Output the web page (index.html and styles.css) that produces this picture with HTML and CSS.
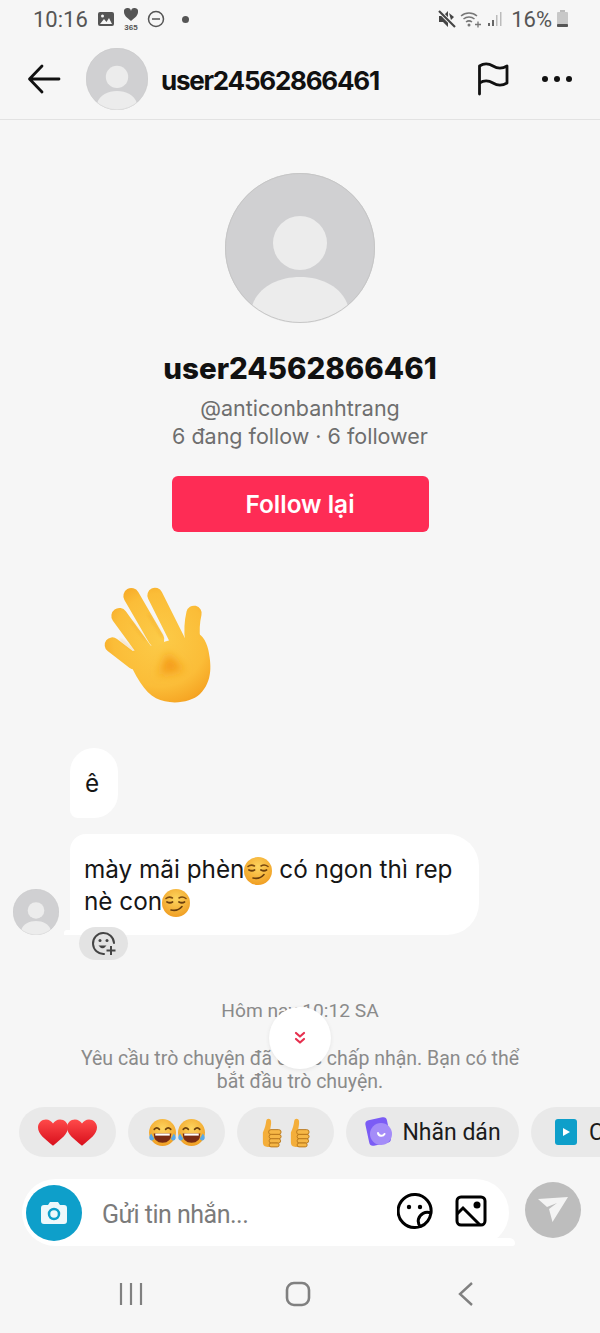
FILE: index.html
```html
<!DOCTYPE html>
<html lang="vi">
<head>
<meta charset="utf-8">
<title>user24562866461</title>
<link rel="stylesheet" href="styles.css">
</head>
<body>
<svg class="defs" width="0" height="0" aria-hidden="true">
  <defs>
    <radialGradient id="face" cx="50%" cy="35%" r="70%"><stop offset="0" stop-color="#fdd55f"/><stop offset="1" stop-color="#ef9a1e"/></radialGradient>
    <radialGradient id="palm" gradientUnits="userSpaceOnUse" cx="300" cy="210" r="215"><stop offset="0" stop-color="#fccb48"/><stop offset=".65" stop-color="#fbbd38"/><stop offset=".9" stop-color="#f6a725"/><stop offset="1" stop-color="#f0981c"/></radialGradient>
    <linearGradient id="heart" x1="0" y1="0" x2="0" y2="1"><stop offset="0" stop-color="#ff4a4a"/><stop offset="1" stop-color="#d80f1c"/></linearGradient>
    <filter id="soft" x="-50%" y="-50%" width="200%" height="200%"><feGaussianBlur stdDeviation="14"/></filter>
    <filter id="soft2" x="-50%" y="-50%" width="200%" height="200%"><feGaussianBlur stdDeviation="4"/></filter>
    <symbol id="avatar" viewBox="0 0 150 150">
      <circle cx="75" cy="75" r="75" fill="#d0d0d2"/>
      <circle cx="75" cy="70" r="27" fill="#ececec"/>
      <path d="M27 133c6-19 26-29 48-29s42 10 48 29a75 75 0 0 1-96 0z" fill="#ececec"/>
      <circle cx="75" cy="75" r="74.500" fill="none" stroke="#c6c6c6"/>
    </symbol>
    <symbol id="smirk" viewBox="0 0 28 28">
      <circle cx="14" cy="14" r="14" fill="url(#face)"/>
      <path d="M4 9.500q3-2.500 6.500-.5M17 9q3.500-2 7 .5" fill="none" stroke="#7a4a10" stroke-width="1.500" stroke-linecap="round"/>
      <path d="M5 13q3 1.500 5.500 0M17 13q3 1.500 5.500 0" fill="none" stroke="#6b3f0d" stroke-width="1.800" stroke-linecap="round"/>
      <path d="M9 21q7 1.500 11-3.500" fill="none" stroke="#6b3f0d" stroke-width="1.600" stroke-linecap="round"/>
    </symbol>
    <symbol id="laugh" viewBox="0 0 28 28">
      <circle cx="14" cy="14" r="13" fill="url(#face)"/>
      <path d="M6 11q2.500-3 5 0M17 11q2.500-3 5 0" fill="none" stroke="#6b3f0d" stroke-width="1.600" stroke-linecap="round"/>
      <path d="M5.500 15h17q0 9-8.500 9t-8.500-9z" fill="#7a2c13"/>
      <path d="M7 15h14v2H7z" fill="#fff"/>
      <path d="M3 15q-3 4-1 6t4-1zM25 15q3 4 1 6t-4-1z" fill="#5aa9e6"/>
    </symbol>
    <symbol id="thumb" viewBox="0 0 24 32">
      <path d="M3 16c2-4 3-8 3.500-12 .3-3 4.500-3 5 0 .4 3-.4 6-.9 9H12v18H8c-3 0-5-1-5-5z" fill="#f4ae3a"/>
      <rect x="9" y="13" width="13" height="5" rx="2.500" fill="#f6b746" stroke="#b9781c"/>
      <rect x="9.500" y="18" width="12.500" height="4.500" rx="2.200" fill="#f6b746" stroke="#b9781c"/>
      <rect x="9.500" y="22.500" width="12" height="4.500" rx="2.200" fill="#f6b746" stroke="#b9781c"/>
      <rect x="9.500" y="27" width="10.500" height="4" rx="2" fill="#f6b746" stroke="#b9781c"/>
    </symbol>
    <symbol id="redheart" viewBox="0 0 32 28">
      <path d="M16 28C7 21 0 15.500 0 8.500 0 3.500 3.800 0 8.500 0 11.700 0 14.500 1.700 16 4.500 17.500 1.700 20.300 0 23.500 0 28.200 0 32 3.500 32 8.500 32 15.500 25 21 16 28z" fill="url(#heart)"/>
    </symbol>
  </defs>
</svg>

<div class="screen">
  <div class="status">
    <div class="status-left">
      <span class="time">10:16</span>
      <svg class="st-ic" width="18" height="16" viewBox="0 0 18 16"><rect x="1" y="1" width="16" height="14" rx="2" fill="#555"/><circle cx="5.500" cy="5" r="1.500" fill="#f6f6f6"/><path d="M3 13l4-5 2.500 3 2.500-4 3 6z" fill="#f6f6f6"/></svg>
      <svg class="st-ic" width="16" height="24" viewBox="0 0 16 24"><path d="M8 14C3 10 1 8 1 5a3.500 3.500 0 0 1 7-1 3.500 3.500 0 0 1 7 1c0 3-2 5-7 9z" fill="#555"/><text x="8" y="23" class="tiny">365</text></svg>
      <svg class="st-ic" width="18" height="18" viewBox="0 0 18 18"><circle cx="9" cy="9" r="7.500" fill="none" stroke="#555" stroke-width="1.500"/><path d="M5 9h8" stroke="#555" stroke-width="1.500"/></svg>
      <span class="dot"></span>
    </div>
    <div class="status-right">
      <svg width="18" height="18" viewBox="0 0 18 18"><path d="M1 6h4l5-5v16l-5-5H1z" fill="#444"/><path d="M1 1l16 16" stroke="#f6f6f6" stroke-width="4"/><path d="M1 1l16 16" stroke="#444" stroke-width="2.200"/><path d="M11 3l5 4-3 3z" fill="#444"/></svg>
      <svg width="24" height="18" viewBox="0 0 24 18"><path d="M1 6a12 12 0 0 1 16 0M3.500 9a8.500 8.500 0 0 1 11 0M6 12a5 5 0 0 1 6 0" fill="none" stroke="#777" stroke-width="1.500"/><circle cx="9" cy="15" r="1.500" fill="#777"/><path d="M15 14.500h6M18 11.500v6" fill="none" stroke="#777" stroke-width="1.300"/></svg>
      <svg width="15" height="18" viewBox="0 0 15 18"><rect x="0" y="13" width="2" height="3" fill="#666"/><rect x="4" y="10" width="2" height="6" fill="#666"/><rect x="8" y="5" width="1.500" height="11" fill="#bbb"/><rect x="12" y="2" width="1.500" height="14" fill="#bbb"/></svg>
      <span class="pct">16%</span>
      <svg width="13" height="20" viewBox="0 0 13 20"><rect x="4" y="1" width="5" height="2" fill="#bbb"/><rect x="1" y="3" width="11" height="15" rx="1" fill="#c8c8c8"/><rect x="1" y="15" width="11" height="3" rx="1" fill="#555"/></svg>
    </div>
  </div>

  <header class="topbar">
    <svg class="back" width="34" height="30" viewBox="0 0 34 30"><path d="M32 15H3M15 2L2.500 15 15 28" fill="none" stroke="#111" stroke-width="2.800" stroke-linecap="round" stroke-linejoin="round"/></svg>
    <svg class="top-avatar" width="62" height="62"><use href="#avatar"/></svg>
    <div class="top-name">user24562866461</div>
    <svg class="flag" width="32" height="34" viewBox="0 0 32 34"><path d="M2.500 32V4C7 1 12 1.500 16 4s9 3 14 0v17c-5 3-10 2.500-14 0s-9-3-13.500 0" fill="none" stroke="#111" stroke-width="2.800" stroke-linecap="round" stroke-linejoin="round"/></svg>
    <div class="more"><span></span><span></span><span></span></div>
  </header>

  <main class="chat">
    <section class="profile">
      <svg class="big-avatar" width="150" height="150"><use href="#avatar"/></svg>
      <h1 class="name">user24562866461</h1>
      <div class="handle">@anticonbanhtrang</div>
      <div class="stats">6 đang follow · 6 follower</div>
      <button class="follow">Follow lại</button>
    </section>

    <svg class="wave" width="200" height="150" viewBox="0 0 600 450">
      <g fill="none" stroke="url(#palm)" stroke-linecap="round">
        <path d="M157 225l65 50" stroke-width="46"/>
        <path d="M178 138l80 110" stroke-width="48"/>
        <path d="M214 78l75 130" stroke-width="48"/>
        <path d="M285 76l75 150" stroke-width="46"/>
        <path d="M402 130c-6 26-8 50-4 80" stroke-width="46"/>
      </g>
      <path d="M195 250l170-50c10 5 18 8 30-10 22-8 42 15 50 50 8 40 15 92-25 132-30 28-92 33-132 13-35-18-61-65-93-135z" fill="url(#palm)"/>
      <g fill="none" stroke="#ee9f25" stroke-width="3" filter="url(#soft2)" opacity=".85">
        <path d="M180 208l42 34M215 156l42 54M265 132l42 68"/>
      </g>
      <path d="M322 248l50 52-75 15z" fill="#f49a18" filter="url(#soft)"/>
    </svg>

    <div class="msg-short"><div class="bubble bubble-e">ê</div></div>
    <div class="msg-long">
      <svg class="msg-avatar" width="46" height="46"><use href="#avatar"/></svg>
      <div class="msg-col">
        <div class="bubble bubble-long">mày mãi phèn<svg class="em" width="28" height="28"><use href="#smirk"/></svg> có ngon thì rep nè con<svg class="em" width="28" height="28"><use href="#smirk"/></svg></div>
        <div class="react">
          <svg width="26" height="26" viewBox="0 0 26 26"><path d="M13 23A10.500 10.500 0 1 1 23 12" fill="none" stroke="#444" stroke-width="2" stroke-linecap="round"/><path d="M7.500 14.500q4 5.500 8 0z" fill="#444"/><circle cx="9" cy="9.500" r="1.500" fill="#444"/><circle cx="16" cy="9.500" r="1.500" fill="#444"/><path d="M20 15v9M15.500 19.500h9" stroke="#444" stroke-width="2"/></svg>
        </div>
      </div>
    </div>

    <div class="timestamp">Hôm nay 10:12 SA</div>
    <p class="notice">Yêu cầu trò chuyện đã được chấp nhận. Bạn có thể<br>bắt đầu trò chuyện.</p>
    <button class="scroll-down" aria-label="Cuộn xuống">
      <svg width="12" height="14" viewBox="0 0 12 14"><path d="M2 2l4 3.500L10 2M2 8l4 3.500L10 8" fill="none" stroke="#e6304f" stroke-width="2.200" stroke-linecap="round" stroke-linejoin="round"/></svg>
    </button>
  </main>

  <div class="chips">
    <div class="chip chip-em"><svg width="30" height="27"><use href="#redheart"/></svg><svg class="overlap" width="30" height="27"><use href="#redheart"/></svg></div>
    <div class="chip chip-em"><svg width="29" height="29"><use href="#laugh"/></svg><svg width="29" height="29"><use href="#laugh"/></svg></div>
    <div class="chip chip-em chip-thumb"><svg width="23" height="31"><use href="#thumb"/></svg><svg width="23" height="31"><use href="#thumb"/></svg></div>
    <div class="chip chip-text">
      <svg width="30" height="30" viewBox="0 0 30 30"><rect x="3" y="1.500" width="22" height="26" rx="4" transform="rotate(-12 14 14)" fill="#7b5cf5"/><circle cx="17" cy="17" r="11" fill="#a48cf8"/><path d="M14 16a3.500 3.500 0 0 0 6.500 1" fill="none" stroke="#fff" stroke-width="2" stroke-linecap="round"/></svg>
      <span>Nhãn dán</span>
    </div>
    <div class="chip chip-text chip-last">
      <svg width="22" height="26" viewBox="0 0 22 26"><rect width="22" height="26" rx="3" fill="#0e9fca"/><path d="M8 9l7 4-7 4z" fill="#fff"/></svg>
      <span>C</span>
    </div>
  </div>

  <div class="composer">
    <div class="input">
      <div class="camera">
        <svg width="28" height="24" viewBox="0 0 28 24"><path d="M4 4h4l2-3h8l2 3h4a3 3 0 0 1 3 3v13a3 3 0 0 1-3 3H4a3 3 0 0 1-3-3V7a3 3 0 0 1 3-3z" fill="#eef8fb"/><circle cx="14" cy="13" r="5" fill="none" stroke="#0e9fca" stroke-width="2.500"/></svg>
      </div>
      <span class="placeholder">Gửi tin nhắn...</span>
      <svg class="sticker" width="36" height="36" viewBox="0 0 36 36"><path d="M34 20A16.500 16.500 0 1 0 18 34.500c2 0 4-.3 5.500-1C30 31 33 26 34 20c-6-2-11 1-12.500 6-.6 2.500 0 5.500 2 7.500" fill="none" stroke="#000" stroke-width="3" stroke-linejoin="round"/><circle cx="12" cy="14" r="2.200"/><circle cx="23" cy="14" r="2.200"/></svg>
      <svg class="picture" width="32" height="32" viewBox="0 0 32 32"><rect x="2" y="2" width="28" height="28" rx="4" fill="none" stroke="#000" stroke-width="3"/><circle cx="22" cy="10" r="3.500"/><path d="M2 19l6-6 17 17" fill="none" stroke="#000" stroke-width="3"/></svg>
    </div>
    <div class="send">
      <svg width="30" height="26" viewBox="0 0 30 26"><path d="M0 2l30-2-15.500 25L11 12l8-6-10 4z" fill="#f4f4f4"/></svg>
    </div>
  </div>

  <nav class="navbar">
    <svg width="24" height="24" viewBox="0 0 24 24"><path d="M2 1v22M12 1v22M22 1v22" stroke="#808080" stroke-width="2.200"/></svg>
    <svg width="26" height="26" viewBox="0 0 26 26"><rect x="2" y="2" width="22" height="22" rx="7" fill="none" stroke="#808080" stroke-width="2.600"/></svg>
    <svg width="16" height="26" viewBox="0 0 16 26"><path d="M14 2L2 13l12 11" fill="none" stroke="#808080" stroke-width="2.400"/></svg>
  </nav>
</div>
</body>
</html>
```
FILE: styles.css
```css
* { box-sizing: border-box; }
html, body { margin: 0; padding: 0; }
body { width: 600px; height: 1333px; overflow: hidden; background: #f6f6f6; font-family: Roboto, "Liberation Sans", sans-serif; }
.defs { display: block; height: 0; }
.tiny { font: bold 8px "Liberation Sans", sans-serif; fill: #555; text-anchor: middle; }
.screen { width: 600px; height: 1333px; display: flex; flex-direction: column; overflow: hidden; }

.status { height: 38px; flex: none; display: flex; justify-content: space-between; align-items: center; padding: 0 31px 0 33px; color: #555; }
.status-left, .status-right { display: flex; align-items: center; }
.time { font-size: 22px; margin-right: 9px; }
.st-ic { margin-right: 8px; }
.dot { width: 7px; height: 7px; border-radius: 50%; background: #555; margin-left: 9px; }
.status-right { gap: 4px; }
.pct { font-size: 22px; margin-left: 4px; }

.topbar { height: 82px; flex: none; display: flex; align-items: center; border-bottom: 1px solid #e2e2e2; padding-left: 27px; }
.back { margin-right: 25px; }
.top-name { font-family: Inter, sans-serif; font-size: 26px; font-weight: 700; color: #111; margin-left: 13px; letter-spacing: -1.250px; flex: 1; padding-top: 3px; }
.flag { margin-right: 33px; }
.more { display: flex; gap: 6px; margin-right: 28px; }
.more span { width: 6px; height: 6px; border-radius: 50%; background: #111; }

.chat { flex: 1; min-height: 0; position: relative; display: flex; flex-direction: column; padding-top: 53px; }
.profile { display: flex; flex-direction: column; align-items: center; font-family: Inter, sans-serif; }
.big-avatar { display: block; }
.name { margin: 26px 0 0; font-size: 29.500px; line-height: 38px; font-weight: 800; color: #111; white-space: nowrap; }
.handle { margin-top: 7px; font-size: 21.500px; line-height: 28px; color: #6e6e6e; }
.stats { font-size: 21.500px; line-height: 28px; color: #6e6e6e; }
.follow { margin-top: 26px; width: 257px; height: 56px; border: 0; border-radius: 6px; background: #fe2c55; color: #fff; font: 600 24.400px Inter, sans-serif; }

.wave { display: block; margin: 38px 0 28px 60px; flex: none; }
.msg-short { padding-left: 70px; }
.bubble { background: #fff; color: #161616; font-family: Inter, sans-serif; font-size: 24.300px; line-height: 32px; }
.bubble-e { width: 48px; height: 70px; border-radius: 24px 24px 24px 8px; padding-left: 15px; display: flex; align-items: center; }
.msg-long { display: flex; align-items: flex-start; margin-top: 16px; padding-left: 13px; }
.msg-avatar { margin-top: 55px; margin-right: 11px; flex: none; }
.msg-col { width: 409px; position: relative; }
.bubble-long { position: relative; padding: 19px 14px 18px; height: 101px; border-radius: 16px 32px 32px 4px; }
.bubble-long::after { content: ""; position: absolute; left: -6px; bottom: 0; width: 14px; height: 5px; background: #fff; border-radius: 3px 0 0 0; }
.em { vertical-align: -7px; }
.react { width: 49px; height: 33px; margin: -8px 0 0 9px; position: relative; background: #e3e3e3; border-radius: 17px; display: flex; align-items: center; justify-content: center; }

.timestamp { text-align: center; margin-top: 38px; font-size: 19.200px; line-height: 26px; color: #8a8a8a; }
.notice { margin: 23px 0 0; text-align: center; font-size: 19.500px; line-height: 23px; color: #8a8a8a; }
.scroll-down { position: absolute; left: 269px; top: 887px; width: 62px; height: 62px; border: 0; border-radius: 50%; background: #fff; box-shadow: 0 1px 4px rgba(0,0,0,.08); display: flex; align-items: center; justify-content: center; padding: 0; }

.chips { flex: none; display: flex; gap: 12px; padding-left: 19px; height: 50px; margin-bottom: 22px; }
.chip { flex: none; height: 50px; background: #e9e9e9; border-radius: 25px; display: flex; align-items: center; justify-content: center; }
.chip svg { flex: none; }
.chip-em { width: 97px; }
.overlap { margin-left: -1px; }
.chip-thumb { gap: 5px; }
.chip-text { padding: 0 20px; gap: 8px; font-family: Roboto, sans-serif; font-size: 23px; color: #1b1b1b; width: 173px; white-space: nowrap; }
.chip-last { width: 140px; justify-content: flex-start; padding-left: 24px; gap: 12px; }

.composer { flex: none; height: 67px; display: flex; padding-left: 22px; }
.input { position: relative; width: 487px; height: 67px; background: #fff; border-radius: 34px; display: flex; align-items: center; padding: 0 0 0 4px; }
.input::after { content: ""; position: absolute; right: -6px; bottom: 0; width: 40px; height: 8px; background: #fff; border-radius: 0 6px 3px 0; }
.camera { width: 56px; height: 56px; border-radius: 50%; background: #0e9fca; display: flex; align-items: center; justify-content: center; }
.placeholder { font-size: 25px; color: #7b7b7b; margin-left: 20px; flex: 1; letter-spacing: -.5px; padding-top: 3px; }
.sticker { margin-right: 22px; position: relative; z-index: 1; margin-top: -3px; }
.picture { margin-right: 22px; position: relative; z-index: 1; margin-top: -3px; }
.send { width: 56px; height: 56px; margin: 3px 0 0 16px; border-radius: 50%; background: #bdbdbd; display: flex; align-items: center; justify-content: center; }

.navbar { flex: none; height: 87px; display: flex; align-items: center; padding: 9px 0 0 119px; gap: 0; }
.navbar svg:nth-child(1) { margin-right: 142px; }
.navbar svg:nth-child(2) { margin-right: 147px; }
```
